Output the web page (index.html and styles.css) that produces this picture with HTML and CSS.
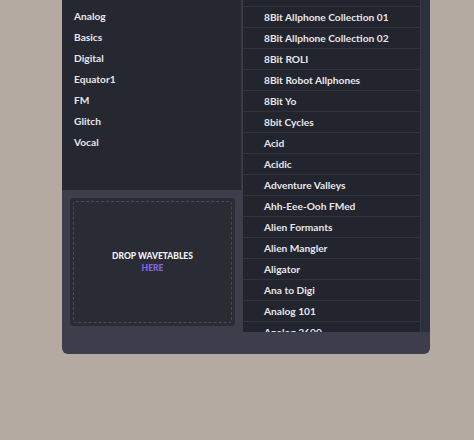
FILE: index.html
```html
<!DOCTYPE html>
<html lang="en">
<head>
    <meta charset="UTF-8">
    <meta name="viewport" content="width=device-width, initial-scale=1.0">
    <title>Wavetable Browser</title>
    <link rel="stylesheet" href="styles.css">
</head>
<body>
    <div class="panel">
        <div class="sidebar">
            <ul class="categories">
                <li>Analog</li>
                <li>Basics</li>
                <li>Digital</li>
                <li>Equator1</li>
                <li>FM</li>
                <li>Glitch</li>
                <li>Vocal</li>
            </ul>
            <div class="drop-wrap">
                <div class="dropzone">
                    <div class="drop-inner">
                        <span class="drop-title">Drop wavetables</span>
                        <span class="drop-here">Here</span>
                    </div>
                </div>
            </div>
        </div>

        <div class="browser">
            <ul class="tables">
                <li class="spacer"></li>
                <li>8Bit Allphone Collection 01</li>
                <li>8Bit Allphone Collection 02</li>
                <li>8Bit ROLI</li>
                <li>8Bit Robot Allphones</li>
                <li>8Bit Yo</li>
                <li>8bit Cycles</li>
                <li>Acid</li>
                <li>Acidic</li>
                <li>Adventure Valleys</li>
                <li>Ahh-Eee-Ooh FMed</li>
                <li>Alien Formants</li>
                <li>Alien Mangler</li>
                <li>Aligator</li>
                <li>Ana to Digi</li>
                <li>Analog 101</li>
                <li>Analog 2600</li>
            </ul>
            <div class="scrollbar"></div>
        </div>
    </div>
</body>
</html>
```

FILE: styles.css
```css
body {
    margin: 0;
    padding: 0;
    background-color: #b4aaa2;
    font-family: Lato, "Open Sans", sans-serif;
    font-weight: 700;
    font-size: 10.2px;
    color: #e6e6ea;
}
ul {
    list-style: none;
    margin: 0;
    padding: 0;
}
.panel {
    display: flex;
    width: 368px;
    height: 354px;
    margin-left: 62px;
    background-color: #3d3e4b;
    border-radius: 0 0 6px 6px;
    overflow: hidden;
}
.sidebar {
    width: 180px;
    display: flex;
    flex-direction: column;
}
.categories {
    height: 184px;
    padding: 6px 0 0 12px;
    background-color: #252831;
    border-right: 1px solid #343845;
}
.categories li {
    height: 21px;
    line-height: 21px;
}
.drop-wrap {
    padding: 8px 7px 0 8px;
}
.dropzone {
    height: 122px;
    padding: 3px;
    background-color: #2a2c35;
    border-radius: 4px;
}
.drop-inner {
    height: 100%;
    box-sizing: border-box;
    border: 1px dashed #474a57;
    border-radius: 3px;
    display: flex;
    flex-direction: column;
    align-items: center;
    justify-content: center;
    gap: 2px;
    text-transform: uppercase;
    font-size: 8.5px;
    font-weight: 900;
}
.drop-title {
    color: #f0f0f2;
}
.drop-here {
    color: #8468e0;
}
.browser {
    flex: 1;
    display: flex;
    height: 332px;
    margin-left: 1px;
    overflow: hidden;
}
.tables {
    flex: 1;
    background-color: #22252d;
}
.tables li {
    height: 20px;
    line-height: 20px;
    padding-left: 21px;
    border-bottom: 1px solid #2f323b;
    white-space: nowrap;
}
.tables li.spacer {
    height: 6px;
}
.scrollbar {
    width: 9px;
    background-color: #2c303c;
    border-left: 1px solid #363a47;
}
```
